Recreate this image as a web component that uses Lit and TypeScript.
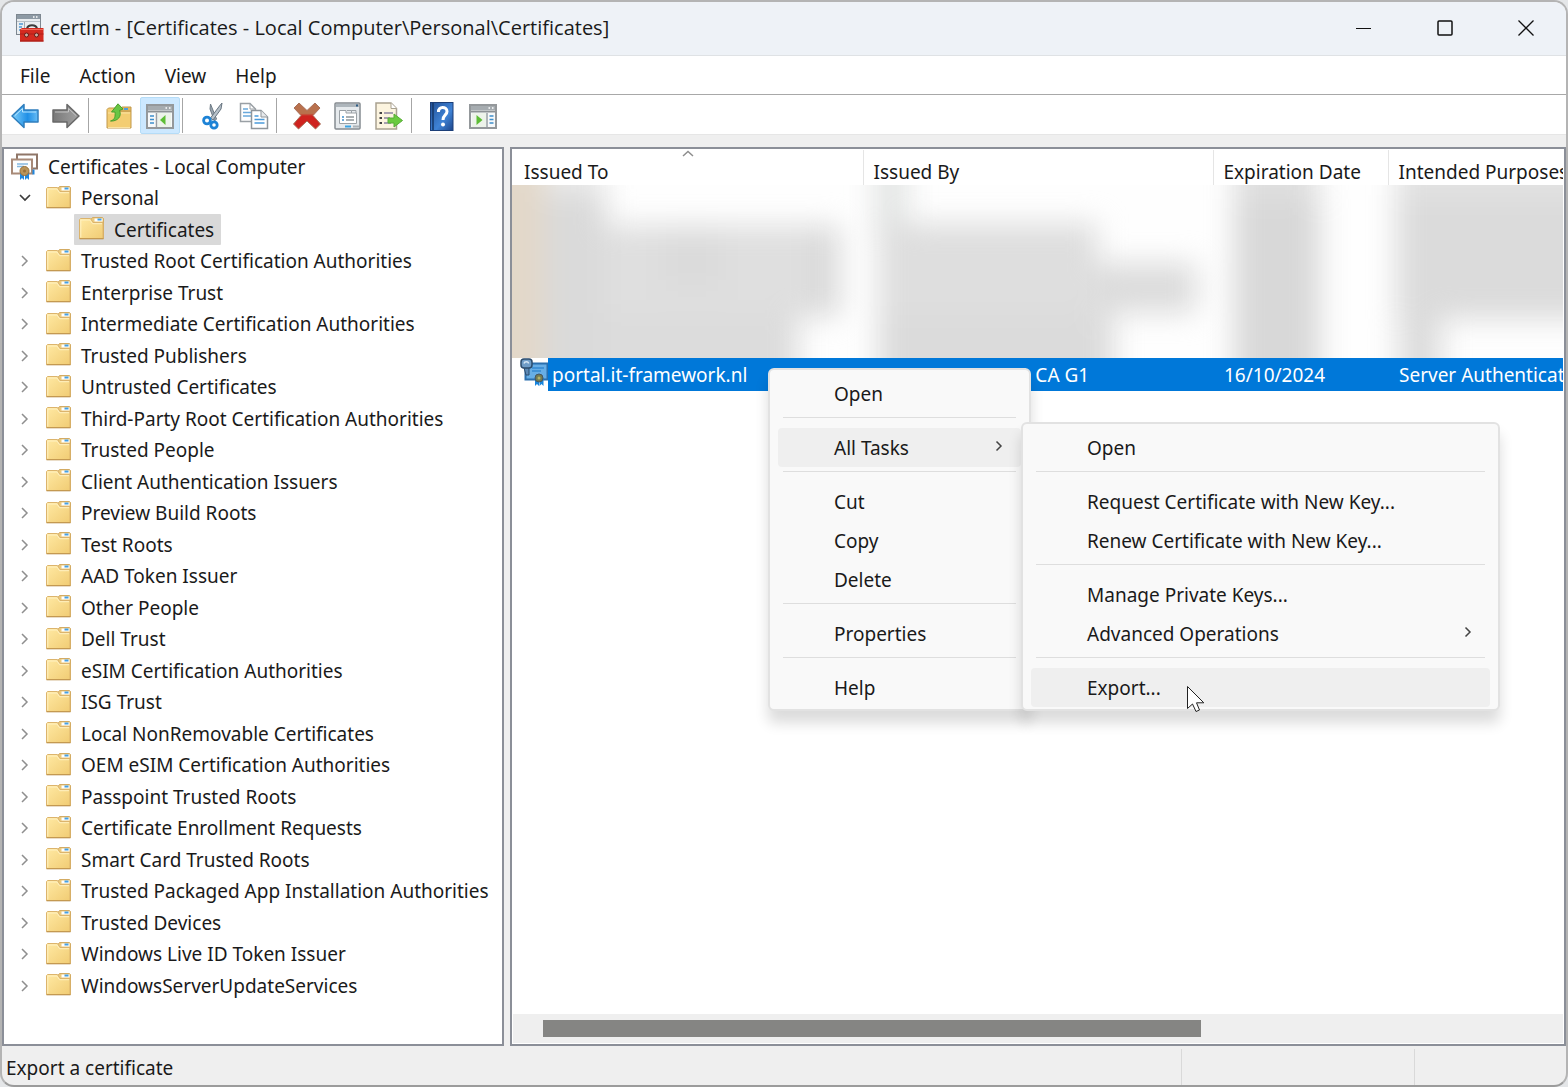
import { LitElement, html, css, svg, nothing, TemplateResult } from "lit";
import { customElement } from "lit/decorators.js";
import { classMap } from "lit/directives/class-map.js";

const icon = (w: number, h: number, body: TemplateResult) =>
  html`<svg width=${w} height=${h} viewBox="0 0 ${w} ${h}" fill="none" aria-hidden="true">${body}</svg>`;

const folderIcon = icon(25, 24, svg`
  <defs><linearGradient id="fold" x1="0" y1="0" x2="1" y2="1">
    <stop offset="0" stop-color="#ffe9a3"/><stop offset="1" stop-color="#f1cc74"/></linearGradient></defs>
  <path d="M11.500 4L13.500 1.500H23.500L24.500 2.500V22.500H13Z" fill="#ecca7d" stroke="#d3ab63"/>
  <rect x="15.500" y="2.500" width="8" height="3" fill="#fff"/><rect x="18.500" y="2.500" width="4" height="2" fill="#45a0e4"/>
  <path d="M.5 22.500V3.500L1.500 2.500H11.500L14 6.500H24V22.500Z" fill="url(#fold)" stroke="#dcb46c"/>
  <path d="M.5 22.800H24.500" stroke="#b98d47"/>
  <path d="M1.800 21.500V4H11L13.500 7.700H23" stroke="#fff1c2"/>`);

const rootIcon = icon(28, 28, svg`
  <rect x="6" y="1.500" width="20" height="14" fill="#fff" stroke="#8f7668" stroke-width="2"/>
  <rect x="1" y="6.500" width="20" height="14" fill="#fdfdfd" stroke="#a88a78" stroke-width="2"/>
  <path d="M6 11h11M6 13.500h7" stroke="#85b8e0" stroke-width="1.500"/>
  <path d="M9 19h4v8l-2-2-2 2zM14 19h4v8l-2-2-2 2z" fill="#1f86dd"/>
  <path d="M22.500 16.500v5" stroke="#1f86dd" stroke-width="2"/>
  <circle cx="13.500" cy="18" r="4.500" fill="#b9945a" stroke="#99713a"/><circle cx="13.500" cy="18" r="1.500" fill="#98703a"/>`);

const certIcon = icon(28, 28, svg`
  <rect x="5.500" y="5.500" width="22" height="16" fill="#67aee6" stroke="#2b6fae" stroke-width="2"/>
  <path d="M12 10h12M12 13h9" stroke="#3489d2" stroke-width="1.500"/>
  <path d="M3.500 8L6 17H9L9 8Z" fill="#5b88b5" stroke="#2c4c6d"/>
  <rect x="1" y="1" width="11" height="9" rx="3" fill="#6f9cc7" stroke="#2c4c6d" stroke-width="1.500"/>
  <path d="M4 5.500C4.500 3 8.500 3 8.500 5.500" stroke="#d5e6f5" stroke-width="1.500"/>
  <path d="M15 20h4v8l-2-2-2 2zM19.500 20h4v8l-2-2-2 2z" fill="#1684dc"/>
  <circle cx="19" cy="20" r="4" fill="#717c54" stroke="#475663"/><circle cx="19" cy="20" r="1.500" fill="#b5b169"/>`);

const appIcon = icon(28, 28, svg`
  <rect x=".5" y=".5" width="24" height="20" fill="#e9edf0" stroke="#7d8790"/>
  <rect x="1" y="1" width="23" height="4" fill="#8d9aa5"/><path d="M17 3h1.500M20 3h1.500" stroke="#fff" stroke-width="1.500"/>
  <path d="M1 7.500h23" stroke="#b9c1c8"/><path d="M3 10h4M3 13h3M3 16h2" stroke="#4f98d4" stroke-width="1.500"/>
  <path d="M8.500 8v12" stroke="#a0a8af"/>
  <path d="M11 14.500C12 10 20 10 21 14.500" stroke="#3c3c3c" stroke-width="2"/>
  <path d="M4 15.500L6 14H27.500V27.500H4Z" fill="#d42a20"/><path d="M4 20H27.500" stroke="#b01f18"/>
  <path d="M4 27h23.500" stroke="#a01b14"/><path d="M5 15.500h22" stroke="#ee6a5a"/>
  <circle cx="10.500" cy="21" r="2" fill="#c9b3a8" stroke="#6a1a14"/><circle cx="20.500" cy="21" r="2" fill="#c9b3a8" stroke="#6a1a14"/>`);

const back = icon(28, 26, svg`
  <defs><linearGradient id="bk" x1="0" x2="1"><stop offset="0" stop-color="#7fd0fb"/><stop offset=".6" stop-color="#1f8fe6"/><stop offset="1" stop-color="#68bdf5"/></linearGradient></defs>
  <path d="M1 13L13 1.500V7H27V19H13V24.500Z" fill="url(#bk)" stroke="#2f7ebd" stroke-width="1.500" stroke-linejoin="round"/>
  <path d="M4 12.500L11.500 5.500V9H25" stroke="#b9e6ff" />`);
const forward = icon(28, 26, svg`
  <defs><linearGradient id="fw" x1="0" x2="1"><stop offset="0" stop-color="#777"/><stop offset="1" stop-color="#a4a4a4"/></linearGradient></defs>
  <path d="M27 13L15 1.500V7H1V19H15V24.500Z" fill="url(#fw)" stroke="#686868" stroke-width="1.500" stroke-linejoin="round"/>
  <path d="M3 9H16.500V5.500L24 12.500" stroke="#c4c4c4"/>`);
const upFolder = icon(26, 26, svg`
  <path d="M1 25V6.500L2.500 5H11L14 8H25V25Z" fill="#f3cd72" stroke="#c2984a"/>
  <path d="M14 7L16 4H25V8H14" fill="#e4ba61" stroke="#c2984a"/><rect x="18" y="5" width="4" height="2" fill="#4d9fe0"/>
  <path d="M2 10H24M2 24.500H24" stroke="#fae3a4"/>
  <path d="M4.500 18C9 17 9.500 13 9 9L5.500 9L12 .8L17 6L13.500 7.500C16 13 12 18.500 4.500 18Z" fill="#69c544" stroke="#4a9f2c"/>`);

const consoleFrame = svg`
  <rect x="1" y="1" width="26" height="23" fill="#f7f9fa" stroke="#94989b" stroke-width="2"/>
  <rect x="2" y="2" width="24" height="4" fill="#a6acb0"/><path d="M19.500 4H21M23 4h1.500" stroke="#fff" stroke-width="1.500"/>
  <path d="M2 7.500H26" stroke="#8c9194" stroke-width="2"/>`;
const consoleTree = icon(28, 25, svg`${consoleFrame}
  <path d="M10.500 9v14" stroke="#999fa3" stroke-width="1.500"/>
  <path d="M4 12h4M4 15.500h4M4 19h4" stroke="#3e8ecb" stroke-width="1.500"/>
  <rect x="12" y="9" width="13" height="14" fill="#edf3ea"/><path d="M19.500 11V21L14 16Z" fill="#5dbd35"/>`);
const actionPane = icon(28, 25, svg`${consoleFrame}
  <path d="M18 9v14" stroke="#999fa3" stroke-width="1.500"/>
  <path d="M20.500 12h4M20.500 15.500h4M20.500 19h4" stroke="#3e8ecb" stroke-width="1.500"/>
  <rect x="3" y="9" width="14" height="14" fill="#edf3ea"/><path d="M7.500 11V21L13.500 16Z" fill="#5dbd35"/>`);

const cut = icon(22, 28, svg`
  <path d="M8.500 2L8 7L12.500 19L14.500 17Z" fill="#9ba6b0" stroke="#6d7a85"/>
  <path d="M20 1L17.500 4L8.500 16L11 18L19 7Z" fill="#b8c2ca" stroke="#677480"/>
  <circle cx="5" cy="18.500" r="3.400" stroke="#1d83d6" stroke-width="2.800"/>
  <circle cx="12" cy="23" r="3.200" stroke="#1d83d6" stroke-width="2.800"/>`);
const copy = icon(30, 28, svg`
  <path d="M1.500 1.500H11L16.500 7V19.500H1.500Z" fill="#fff" stroke="#9aa0a5" stroke-width="1.500"/>
  <path d="M11 1.500V7H16.500" stroke="#9aa0a5"/><path d="M4 7h5M4 10.500h9M4 14h9" stroke="#6aa9dc" stroke-width="1.500"/>
  <path d="M12.500 8.500H22L28.500 15V26.500H12.500Z" fill="#fff" stroke="#8f959a" stroke-width="1.500"/>
  <path d="M22 8.500V15H28.500" fill="#e6e9eb" stroke="#8f959a"/><path d="M15.500 14h4M15.500 17.500h10M15.500 21h10" stroke="#4b9ada" stroke-width="1.500"/>`);
const remove = icon(28, 28, svg`
  <defs><linearGradient id="rm" x1="0" y1="0" x2="0" y2="1"><stop offset=".4" stop-color="#b9714d"/><stop offset=".5" stop-color="#cf231f"/></linearGradient></defs>
  <path d="M1 6L6 1L14 8.500L22 1L27 6L20 13.500L27.500 22L22.500 27L14 19L5.500 27L.5 22L8 13.500Z" fill="url(#rm)" stroke="#a9705a" stroke-linejoin="round"/>`);
const properties = icon(28, 28, svg`
  <rect x="1" y="1" width="25" height="26" rx="1" fill="#e6eaed" stroke="#858b90" stroke-width="1.500"/>
  <rect x="2" y="2" width="23" height="3" fill="#aeb6bc"/><path d="M22 3.500h2" stroke="#2e5d86" stroke-width="2"/>
  <path d="M5.500 21.500V8.500H12V11H22.500V21.500Z" fill="#fff" stroke="#9ba1a6"/><path d="M13 8.500h4.500V11M17.500 8.500H22V11" stroke="#9ba1a6"/>
  <path d="M8 15h2M8 18h2" stroke="#3e8ecb" stroke-width="1.500"/><path d="M12 15h8M12 18h8" stroke="#8f969b" stroke-width="1.500"/>
  <path d="M11 24.500h6" stroke="#39a3e4" stroke-width="2"/><path d="M19 24.500h6" stroke="#aab2b8" stroke-width="2"/>`);
const exportList = icon(30, 28, svg`
  <path d="M2 1H17L22.500 6.500V27H2Z" fill="#fcf4df" stroke="#a9a190" stroke-width="1.500"/><path d="M17 1V6.500H22.500" fill="#fff" stroke="#a9a190"/>
  <path d="M5.500 11h2.500M5.500 16h2.500M5.500 21h2.500" stroke="#444" stroke-width="2"/><path d="M10 11h9M10 16h6M10 21h7" stroke="#8a83a0" stroke-width="1.500"/>
  <path d="M14 16H20V12L28.500 18.500L20 25V21H14Z" fill="#6acb3f" stroke="#57ab37"/>`);
const help = icon(24, 29, svg`
  <defs><linearGradient id="hp" x1="0" x2="1" y2="1"><stop offset="0" stop-color="#225197"/><stop offset=".6" stop-color="#3f83d6"/><stop offset="1" stop-color="#1c458a"/></linearGradient></defs>
  <rect x=".5" y=".5" width="22.500" height="28" fill="url(#hp)" stroke="#1c3f78"/><path d="M3 1v27" stroke="#153769" stroke-width="1.500"/>
  <path d="M8.500 10C8 4 17 4 17 9.500C17 13 13 13 13 18" stroke="#fff" stroke-width="3"/><circle cx="13" cy="22.500" r="2" fill="#fff"/>`);

const chevronRight = icon(10, 14, svg`<path d="M2 2L7 7L2 12" stroke="currentColor" stroke-width="1.500"/>`);
const chevronDown = icon(12, 10, svg`<path d="M1 2L6 7L11 2" stroke="currentColor" stroke-width="1.700"/>`);
const sortUp = icon(12, 8, svg`<path d="M1 6L6 1.500L11 6" stroke="#8e8e8e" stroke-width="1.500"/>`);
const menuChevron = icon(8, 12, svg`<path d="M1.500 1.500L6 6L1.500 10.500" stroke="#444" stroke-width="1.500"/>`);
const pointer = icon(20, 28, svg`<path d="M1.500 1.500V23.500L6.500 19L10 26.500L13.500 25L10.500 17.800H17.800Z" fill="#fff" stroke="#222"/>`);

const font = css`
  * { box-sizing: border-box; }
  button { font: inherit; color: inherit; background: none; border: 0; padding: 0; margin: 0; text-align: left; }
  ul { list-style: none; margin: 0; padding: 0; }
  svg { display: block; flex: none; }
`;

type Tool = { label: string; icon: TemplateResult; on?: boolean } | null;
const tools: Tool[] = [
  { label: "Back", icon: back }, { label: "Forward", icon: forward }, null,
  { label: "Up one level", icon: upFolder }, { label: "Show/Hide Console Tree", icon: consoleTree, on: true }, null,
  { label: "Cut", icon: cut }, { label: "Copy", icon: copy }, null,
  { label: "Delete", icon: remove }, { label: "Properties", icon: properties }, { label: "Export List", icon: exportList }, null,
  { label: "Help", icon: help }, { label: "Show/Hide Action Pane", icon: actionPane },
];

@customElement("tool-bar")
class ToolBar extends LitElement {
  static styles = [font, css`
    :host { display: flex; align-items: center; gap: 1px; height: 40px; padding: 2px 0 0 3px; background: #fff; border-bottom: 1px solid #e6e6e6; }
    .tool { display: grid; place-items: center; width: 40px; height: 37px; padding-top: 1px; border: 1px solid transparent; border-radius: 2px; }
    .on { background: #cce8ff; border-color: #b5dcf7; }
    .sep { width: 1px; height: 35px; margin: 0 9px 0 1px; background: #a6a6a6; }
  `];
  render() {
    return tools.map((t) => t
      ? html`<button class=${classMap({ tool: true, on: !!t.on })} aria-label=${t.label}>${t.icon}</button>`
      : html`<span class="sep"></span>`);
  }
}

const stores = [
  "Trusted Root Certification Authorities", "Enterprise Trust", "Intermediate Certification Authorities",
  "Trusted Publishers", "Untrusted Certificates", "Third-Party Root Certification Authorities", "Trusted People",
  "Client Authentication Issuers", "Preview Build Roots", "Test Roots", "AAD Token Issuer", "Other People",
  "Dell Trust", "eSIM Certification Authorities", "ISG Trust", "Local NonRemovable Certificates",
  "OEM eSIM Certification Authorities", "Passpoint Trusted Roots", "Certificate Enrollment Requests",
  "Smart Card Trusted Roots", "Trusted Packaged App Installation Authorities", "Trusted Devices",
  "Windows Live ID Token Issuer", "WindowsServerUpdateServices",
];

@customElement("store-tree")
class StoreTree extends LitElement {
  static styles = [font, css`
    :host { display: block; background: #fff; border: 2px solid #8b8f98; padding-top: 2px; overflow: hidden; }
    .row { display: flex; align-items: center; height: 31px; white-space: nowrap; }
    .row:nth-child(even) { height: 32px; }
    .root { padding-left: 7px; gap: 9px; }
    .toggle { flex: none; display: grid; place-items: center; width: 41px; height: 30px; color: #8f8f8f; }
    .open { color: #3c3c3c; }
    .store { display: flex; align-items: center; gap: 10px; padding-left: 1px; }
    .child { padding-left: 70px; }
    .selected { display: flex; align-items: center; gap: 10px; height: 31px; padding: 0 7px 0 5px; background: #d9d9d9; border-radius: 1px; }
    .glyph { padding-bottom: 3px; }
  `];
  private row(label: string, open = false) {
    return html`<li class="row" role="treeitem" aria-expanded=${open}>
      <button class=${classMap({ toggle: true, open })} aria-label="Toggle ${label}">${open ? chevronDown : chevronRight}</button>
      <span class="store"><span class="glyph">${folderIcon}</span><span>${label}</span></span>
    </li>`;
  }
  render() {
    return html`<ul role="tree">
      <li class="row root" role="treeitem">${rootIcon}<span>Certificates - Local Computer</span></li>
      ${this.row("Personal", true)}
      <li class="row child" role="treeitem" aria-selected="true">
        <span class="selected"><span class="glyph">${folderIcon}</span><span>Certificates</span></span>
      </li>
      ${stores.map((s) => this.row(s))}
    </ul>`;
  }
}

type Item = { label: string; hot?: boolean; more?: boolean } | null;

@customElement("pop-menu")
class PopMenu extends LitElement {
  static properties = { items: { attribute: false } };
  declare items: Item[];
  constructor() {
    super();
    this.items = [];
  }
  static styles = [font, css`
    :host { display: block; background: #f9f9f9; border: 2px solid #e2e2e2; border-radius: 6px; padding: 4px 8px 2px; box-shadow: 0 12px 14px rgba(0, 0, 0, 0.14); }
    .item { display: flex; align-items: center; justify-content: space-between; width: 100%; height: 39px; padding: 1px 18px 0 56px; border-radius: 4px; white-space: nowrap; }
    .hot { background: #efefef; }
    .sep { height: 1px; margin: 4px 5px 10px; background: #dedede; }
    .more { padding-bottom: 4px; }
  `];
  render() {
    return html`<ul role="menu">${this.items.map((i) => i
      ? html`<li role="none"><button role="menuitem" class=${classMap({ item: true, hot: !!i.hot })}>
          <span>${i.label}</span>${i.more ? html`<span class="more">${menuChevron}</span>` : nothing}</button></li>`
      : html`<li class="sep" role="separator"></li>`)}</ul>`;
  }
}

const contextItems: Item[] = [
  { label: "Open" }, null, { label: "All Tasks", hot: true, more: true }, null,
  { label: "Cut" }, { label: "Copy" }, { label: "Delete" }, null, { label: "Properties" }, null, { label: "Help" },
];
const taskItems: Item[] = [
  { label: "Open" }, null, { label: "Request Certificate with New Key..." }, { label: "Renew Certificate with New Key..." }, null,
  { label: "Manage Private Keys..." }, { label: "Advanced Operations", more: true }, null, { label: "Export...", hot: true },
];

/* Redacted rows: x, y, width, height, shade */
const smudges: [number, number, number, number, string][] = [
  [-50, -60, 82, 300, "#e3d8c9"], [32, -60, 60, 70, "#ebebeb"], [32, 8, 62, 230, "#dadada"], [92, 40, 234, 92, "#dfdfdf"],
  [150, 44, 60, 60, "#dbdbdb"], [296, 44, 32, 86, "#dadada"],
  [90, 128, 196, 110, "#dcdcdc"], [362, -60, 34, 110, "#e3e5e4"], [366, 38, 220, 100, "#dedede"],
  [584, 78, 100, 50, "#dcdcdc"], [366, 130, 236, 110, "#dbdbdb"],
  [722, -60, 84, 80, "#dfdfdf"], [722, 14, 86, 230, "#d8d8d8"],
  [884, -60, 240, 72, "#e3e3e3"], [884, 10, 240, 124, "#dbdbdb"], [886, 130, 44, 110, "#dcdcdc"],
];

@customElement("cert-list")
class CertList extends LitElement {
  static styles = [font, css`
    :host { position: relative; display: flex; flex-direction: column; min-width: 0; background: #fff; border: 2px solid #8b8f98; }
    .view { flex: 1; overflow: hidden; padding-top: 1px; margin-right: 1px; }
    table { table-layout: fixed; width: 1180px; border-collapse: collapse; }
    th { position: relative; height: 35px; padding: 9px 0 0 12px; font-weight: 400; text-align: left; white-space: nowrap; line-height: 26px; border-right: 1px solid #e5e5e5; }
    .to { width: 351px; }
    .by { width: 350px; }
    .by, .date, .use { padding-left: 10px; }
    .date { width: 175px; }
    .sort { position: absolute; top: 0; left: 170px; }
    td { padding: 0; }
    .redacted { display: block; width: 1052px; height: 173px; }
    .picked td { height: 33px; padding-left: 11px; background: #0078d9; color: #fff; white-space: nowrap; }
    .picked .name { padding-left: 8px; background: #fff; }
    .cell { display: flex; height: 33px; }
    .label { flex: 1; padding: 3px 0 0 4px; background: #0078d9; }
    .bar { height: 29px; margin: 0 1px 1px; padding: 6px 0 6px 30px; background: #efefef; }
    .thumb { width: 64.5%; height: 17px; background: #858583; }
    .context { position: absolute; left: 256px; top: 219px; width: 263px; }
    .tasks { position: absolute; left: 509px; top: 273px; width: 479px; }
    .pointer { position: absolute; left: 674px; top: 536px; }
  `];
  render() {
    return html`
      <div class="view"><table>
        <thead><tr>
          <th class="to">Issued To<span class="sort">${sortUp}</span></th><th class="by">Issued By</th>
          <th class="date">Expiration Date</th><th class="use">Intended Purposes</th>
        </tr></thead>
        <tbody>
          <tr><td colspan="4"><svg class="redacted" viewBox="0 0 1052 173" preserveAspectRatio="none" aria-hidden="true">
            <defs><filter id="soft" filterUnits="userSpaceOnUse" x="-60" y="-60" width="1180" height="300" color-interpolation-filters="sRGB"><feGaussianBlur stdDeviation="14"/></filter></defs>
            <rect width="1052" height="173" fill="#fefefe"/>
            <g filter="url(#soft)">${smudges.map(([x, y, w, h, c]) => svg`<rect x=${x} y=${y} width=${w} height=${h} fill=${c}/>`)}</g>
          </svg></td></tr>
          <tr class="picked">
            <td class="name"><div class="cell">${certIcon}<span class="label">portal.it-framework.nl</span></div></td>
            <td>GeoTrust TLS RSA CA G1</td><td>16/10/2024</td><td>Server Authentication</td>
          </tr>
        </tbody>
      </table></div>
      <div class="bar"><div class="thumb"></div></div>
      <pop-menu class="context" .items=${contextItems}></pop-menu>
      <pop-menu class="tasks" .items=${taskItems}></pop-menu>
      <span class="pointer">${pointer}</span>`;
  }
}

@customElement("app-root")
class AppRoot extends LitElement {
  static styles = [font, css`
    :host { display: block; background: #e4e6e8; color: #1a1a1a; font: 19px/28px "Noto Sans", "Open Sans", sans-serif; }
    .window { display: flex; flex-direction: column; min-height: 100vh; border: 2px solid #b4b4b4; border-bottom-color: #9b9b9b; border-radius: 14px; background: #efefef; overflow: hidden; }
    .title { display: flex; align-items: center; height: 54px; padding: 0 0 2px 14px; gap: 6px; background: #eef2f7; border-bottom: 1px solid #dfe2e5; }
    .caption { flex: 1; margin: 0; font: 20px/28px "Open Sans", sans-serif; white-space: nowrap; }
    .controls { display: flex; }
    .control { display: grid; place-items: center; width: 81px; height: 51px; }
    .menu { display: flex; height: 39px; padding-left: 3px; background: #fff; border-bottom: 1px solid #a8a8a8; }
    .entry { height: 38px; padding: 2px 14px 0 15px; }
    .panes { flex: 1; display: grid; grid-template-columns: 502px minmax(0, 1fr); gap: 6px; padding-top: 12px; }
    .status { display: flex; height: 39px; }
    .message { flex: 1; padding: 8px 0 0 4px; }
    .slot { width: 233px; margin-top: 3px; border-left: 1px solid #d9d9d9; }
    .last { width: 152px; }
  `];
  render() {
    return html`<div class="window">
      <header class="title">${appIcon}
        <h1 class="caption">certlm - [Certificates - Local Computer\\Personal\\Certificates]</h1>
        <div class="controls">
          <button class="control" aria-label="Minimize">${icon(16, 16, svg`<path d="M0 8.500H15" stroke="#111"/>`)}</button>
          <button class="control" aria-label="Maximize">${icon(16, 16, svg`<rect x="1" y="1" width="14" height="14" rx="1" stroke="#111" stroke-width="1.500"/>`)}</button>
          <button class="control" aria-label="Close">${icon(16, 16, svg`<path d="M.5 .5L15.500 15.500M15.500 .5L.5 15.500" stroke="#111" stroke-width="1.300"/>`)}</button>
        </div>
      </header>
      <nav class="menu">${["File", "Action", "View", "Help"].map((m) => html`<button class="entry">${m}</button>`)}</nav>
      <tool-bar></tool-bar>
      <main class="panes"><store-tree></store-tree><cert-list></cert-list></main>
      <footer class="status"><span class="message">Export a certificate</span><span class="slot"></span><span class="slot last"></span></footer>
    </div>`;
  }
}
